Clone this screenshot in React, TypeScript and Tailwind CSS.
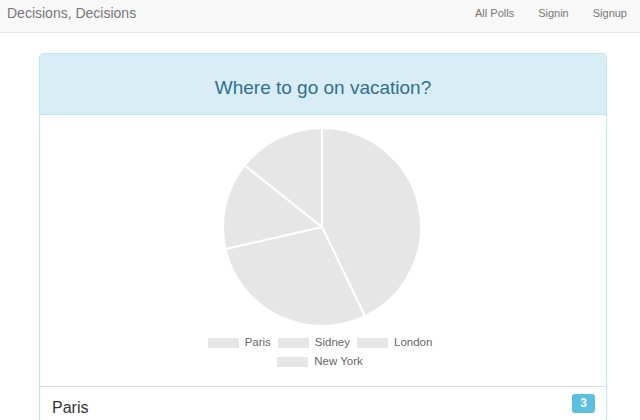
import React from "react";

const slices = [3, 2, 1, 1];

function Pie() {
  const cx = 100;
  const cy = 100;
  const r = 99;
  const total = slices.reduce((a, b) => a + b, 0);
  let acc = 0;
  const paths = slices.map((v, i) => {
    const a0 = (acc / total) * Math.PI * 2;
    acc += v;
    const a1 = (acc / total) * Math.PI * 2;
    const x0 = cx + r * Math.sin(a0);
    const y0 = cy - r * Math.cos(a0);
    const x1 = cx + r * Math.sin(a1);
    const y1 = cy - r * Math.cos(a1);
    const large = a1 - a0 > Math.PI ? 1 : 0;
    const d = `M${cx} ${cy} L${x0} ${y0} A${r} ${r} 0 ${large} 1 ${x1} ${y1} Z`;
    return <path key={i} d={d} fill="#e6e6e6" stroke="#ffffff" strokeWidth={2} />;
  });
  return (
    <svg width={200} height={200} viewBox="0 0 200 200">
      {paths}
    </svg>
  );
}

function LegendItem({ label }: { label: string }) {
  return (
    <div className="flex items-center">
      <span className="w-[31px] h-[10px] bg-[#e6e6e6] mr-[6px]" />
      <span className="text-[11.5px] leading-[13px] text-[#666]">{label}</span>
    </div>
  );
}

export default function App() {
  return (
    <div
      className="w-[640px] h-[420px] overflow-hidden bg-white"
      style={{ fontFamily: '"Liberation Sans", Arial, sans-serif' }}
    >
      <nav className="h-[33px] bg-[#f8f8f8] border-b border-[#e7e7e7] flex items-center justify-between pl-[7px] pr-[13px]">
        <span className="text-[14px] text-[#777] leading-none pb-[6px]">Decisions, Decisions</span>
        <div className="flex gap-[24px] text-[11px] text-[#777] leading-none pb-[6px]">
          <span>All Polls</span>
          <span>Signin</span>
          <span>Signup</span>
        </div>
      </nav>
      <div className="mt-[20px] ml-[39px] w-[568px] border border-[#bce8f1] rounded-[4px]">
        <div className="h-[61px] bg-[#d9edf7] border-b border-[#bce8f1] rounded-t-[3px] flex items-center justify-center">
          <h3 className="text-[19px] text-[#31708f] leading-none mt-[6px]">
            Where to go on vacation?
          </h3>
        </div>
        <div className="flex flex-col items-center pt-[12px] pb-[18px]">
          <div className="ml-[-2px]">
            <Pie />
          </div>
          <div className="flex flex-col items-center gap-[6px] mt-[9px] ml-[-6px]">
            <div className="flex gap-[7px]">
              <LegendItem label="Paris" />
              <LegendItem label="Sidney" />
              <LegendItem label="London" />
            </div>
            <div className="flex gap-[7px]">
              <LegendItem label="New York" />
            </div>
          </div>
        </div>
        <div className="border-t border-[#ddd] flex items-center justify-between pl-[12px] pr-[11px] h-[42px]">
          <span className="text-[16px] text-[#333] mt-[0px]">Paris</span>
          <span className="w-[23px] h-[19px] rounded-[3px] bg-[#5bc0de] text-white text-[12px] font-bold flex items-center justify-center mt-[-9px]">
            3
          </span>
        </div>
      </div>
    </div>
  );
}
